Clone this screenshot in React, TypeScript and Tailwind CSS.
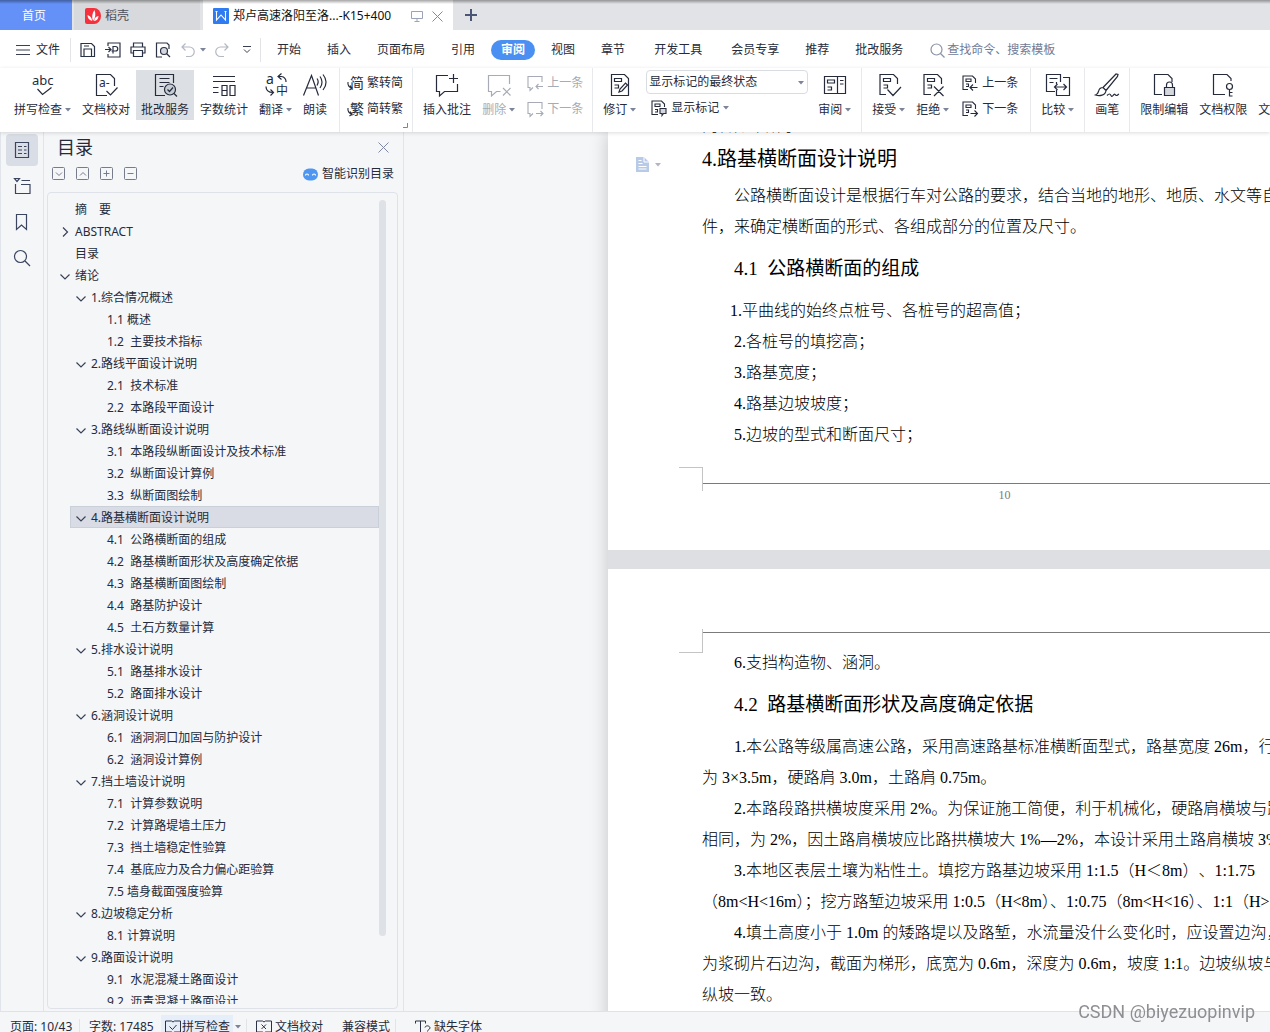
import { useState } from "react";
import type { ReactNode } from "react";
import clsx from "clsx";

type Entry = { level: 0 | 1 | 2; text: string; open?: boolean };

const OUTLINE: Entry[] = [
  { level: 0, text: "摘　要" },
  { level: 0, text: "ABSTRACT", open: false },
  { level: 0, text: "目录" },
  { level: 0, text: "绪论", open: true },
  { level: 1, text: "1.综合情况概述", open: true },
  { level: 2, text: "1.1 概述" },
  { level: 2, text: "1.2  主要技术指标" },
  { level: 1, text: "2.路线平面设计说明", open: true },
  { level: 2, text: "2.1  技术标准" },
  { level: 2, text: "2.2  本路段平面设计" },
  { level: 1, text: "3.路线纵断面设计说明", open: true },
  { level: 2, text: "3.1  本路段纵断面设计及技术标准" },
  { level: 2, text: "3.2  纵断面设计算例" },
  { level: 2, text: "3.3  纵断面图绘制" },
  { level: 1, text: "4.路基横断面设计说明", open: true },
  { level: 2, text: "4.1  公路横断面的组成" },
  { level: 2, text: "4.2  路基横断面形状及高度确定依据" },
  { level: 2, text: "4.3  路基横断面图绘制" },
  { level: 2, text: "4.4  路基防护设计" },
  { level: 2, text: "4.5  土石方数量计算" },
  { level: 1, text: "5.排水设计说明", open: true },
  { level: 2, text: "5.1  路基排水设计" },
  { level: 2, text: "5.2  路面排水设计" },
  { level: 1, text: "6.涵洞设计说明", open: true },
  { level: 2, text: "6.1  涵洞洞口加固与防护设计" },
  { level: 2, text: "6.2  涵洞设计算例" },
  { level: 1, text: "7.挡土墙设计说明", open: true },
  { level: 2, text: "7.1  计算参数说明" },
  { level: 2, text: "7.2  计算路堤墙土压力" },
  { level: 2, text: "7.3  挡土墙稳定性验算" },
  { level: 2, text: "7.4  基底应力及合力偏心距验算" },
  { level: 2, text: "7.5 墙身截面强度验算" },
  { level: 1, text: "8.边坡稳定分析", open: true },
  { level: 2, text: "8.1 计算说明" },
  { level: 1, text: "9.路面设计说明", open: true },
  { level: 2, text: "9.1  水泥混凝土路面设计" },
  { level: 2, text: "9.2  沥青混凝土路面设计" },
];

const INDENT = ["ml-[6px]", "ml-[22px]", "ml-[38px]"];

export default function App() {
  return (
    <div className="flex h-screen flex-col overflow-hidden bg-[#f5f6f8] text-xs text-[#262b3b] [font-family:'Noto_Sans','Noto_Sans_CJK_SC',sans-serif]">
      <TabBar />
      <MenuBar />
      <Ribbon />
      <div className="flex min-h-0 flex-1">
        <SideRail />
        <OutlinePanel />
        <DocumentView />
      </div>
      <StatusBar />
      <p className="fixed bottom-2 right-[15px] z-20 text-lg leading-6 text-[#8d8f93] [font-family:Roboto,sans-serif]">
        CSDN @biyezuopinvip
      </p>
    </div>
  );
}

/* ── Tab bar ── */
function TabBar() {
  return (
    <header className="relative flex h-[30px] shrink-0 bg-[#e2e3e6]">
      <button className="mr-0.5 w-[72px] bg-[#6391f8] pr-1 pt-0.5 text-white">首页</button>
      <button className="mr-[3px] flex w-[126px] items-center gap-1 bg-[#d7d9dc] pl-[11px] pt-0.5 text-[#4b5060]">
        <svg width="16" height="16" viewBox="0 0 16 16">
          <path d="M2 0h7a7 8 0 0 1 0 16H2a2 2 0 0 1-2-2V2a2 2 0 0 1 2-2z" fill="#f6303c" />
          <path d="M8 13C6.500 9 7 5 9.500 2c1.500 4 1 8-1.500 11zM7 13C4 12 2.500 10 2.500 7 5.500 8 7 10 7 13zM9 13c.5-3 2-4.500 4.500-5-.2 3-1.500 4.500-4.500 5z" fill="#fff" />
        </svg>
        稻壳
      </button>
      <div className="flex w-[250px] items-center bg-white pl-2.5 pt-0.5">
        <svg width="16" height="16" viewBox="0 0 16 16" className="mr-1 shrink-0">
          <rect width="16" height="16" rx="1" fill="#2f7bf0" />
          <path d="M3.500 3v9L8 7l4.500 5V3M2.500 3.500h2M11.500 3.500h2" fill="none" stroke="#fff" strokeWidth="1.1" />
        </svg>
        <span className="w-[174px] whitespace-nowrap text-[#111]">郑卢高速洛阳至洛...-K15+400</span>
        <svg width="12" height="12" viewBox="0 0 12 12" fill="none" stroke="#9aa3b8" className="ml-1">
          <path d="M.5 1.500h11v7H.5zM6 8.500v3M3.500 11.500h5" />
        </svg>
        <button aria-label="关闭" className="ml-[9px]">
          <svg width="11" height="11" viewBox="0 0 11 11" fill="none" stroke="#7f89a3">
            <path d="M.5.5l10 10M10.500.5l-10 10" />
          </svg>
        </button>
      </div>
      <button aria-label="新建" className="ml-3">
        <svg width="12" height="12" viewBox="0 0 12 12" stroke="#4b5675" strokeWidth="2">
          <path d="M6 0v12M0 6h12" />
        </svg>
      </button>
      <div className="absolute inset-x-0 top-0 h-1 bg-gradient-to-b from-black/35 to-transparent" />
    </header>
  );
}

/* ── Menu bar ── */
function MenuBar() {
  return (
    <nav className="flex h-[38px] shrink-0 items-center overflow-hidden whitespace-nowrap bg-white pt-0.5">
      <button className="ml-4 flex items-center gap-1.5">
        <svg width="14" height="10" viewBox="0 0 14 10" stroke="#3a4052">
          <path d="M0 .5h14M0 5h14M0 9.500h14" />
        </svg>
        文件
      </button>
      <Divider className="ml-2.5 h-6" />
      <div className="ml-[9px] flex items-center gap-[9px]">
        <QuickButton label="保存">
          <path d="M1 1.500h10.500l3 3v10H1zM4 14.500V7h7.500v7.500M4 4h5" />
        </QuickButton>
        <QuickButton label="输出为PDF">
          <path d="M3 4V1h12v14H3v-3M0 7.500h5.500M3.500 5l2.500 2.500L3.500 10M8 11.500V4.500h2.500a2 2 0 0 1 0 4.500H6.500" />
        </QuickButton>
        <QuickButton label="打印">
          <path d="M3.500 5V1h9v4M3.500 11H1V5h14v6h-2.500M3.500 8.500h9v6h-9z" />
        </QuickButton>
        <QuickButton label="打印预览">
          <path d="M7 15H1.500V1h10.500l2 2v4" />
          <circle cx="9" cy="9" r="3.500" fill="#d4d8de" />
          <path d="M11.500 11.500l3.500 3.500" />
        </QuickButton>
        <QuickButton label="撤销" muted>
          <path d="M5.500 1.500L2 5l3.500 3.500M2 5h7.500a4.500 4.500 0 0 1 0 9.500H6" />
        </QuickButton>
      </div>
      <Caret className="ml-1" />
      <div className="ml-2 flex items-center gap-3">
        <QuickButton label="恢复" muted>
          <path d="M10.500 1.500L14 5l-3.500 3.500M14 5H6.500a4.500 4.500 0 0 0 0 9.500H10" />
        </QuickButton>
        <button aria-label="自定义快速访问工具栏">
          <svg width="10" height="8" viewBox="0 0 10 8" fill="none" stroke="#3a4052">
            <path d="M1 .5h8M2 3.500l3 3 3-3" />
          </svg>
        </button>
      </div>
      <Divider className="ml-2 mr-[3px] h-6" />
      {["开始", "插入", "页面布局", "引用"].map((name) => (
        <button key={name} className="px-[13px]">
          {name}
        </button>
      ))}
      <button className="mx-[3px] h-5 rounded-full bg-[#4a90f2] px-2.5 font-bold text-white">审阅</button>
      {["视图", "章节"].map((name) => (
        <button key={name} className="px-[13px]">
          {name}
        </button>
      ))}
      <button className="px-4">开发工具</button>
      {["会员专享", "推荐", "批改服务"].map((name) => (
        <button key={name} className="px-[13px]">
          {name}
        </button>
      ))}
      <button className="ml-[14px] flex items-center gap-0.5 text-[#727b94]">
        <svg width="15" height="15" viewBox="0 0 15 15" fill="none" stroke="#8a93a8" strokeWidth="1.2">
          <circle cx="6.500" cy="6.500" r="5.500" />
          <path d="M10.500 10.500l4 4" />
        </svg>
        查找命令、搜索模板
      </button>
    </nav>
  );
}

function QuickButton({ label, muted, children }: { label: string; muted?: boolean; children: ReactNode }) {
  return (
    <button aria-label={label} className={muted ? "text-[#b3b8c2]" : "text-[#2b3245]"}>
      <svg width="16" height="16" viewBox="0 0 16 16" fill="none" stroke="currentColor" strokeWidth="1.2">
        {children}
      </svg>
    </button>
  );
}

function Caret({ className }: { className?: string }) {
  return (
    <svg width="6" height="4" viewBox="0 0 6 4" className={clsx("shrink-0", className)}>
      <path d="M0 0h6L3 3.500z" fill="#7b8499" />
    </svg>
  );
}

function Divider({ className }: { className?: string }) {
  return <span className={clsx("w-px shrink-0 bg-[#e2e4e8]", className)} />;
}

/* ── Ribbon ── */
type ButtonProps = {
  label: string;
  caret?: boolean;
  active?: boolean;
  muted?: boolean;
  children: ReactNode;
};

function BigButton({ label, caret, active, muted, children }: ButtonProps) {
  return (
    <button
      className={clsx(
        "flex h-[50px] shrink-0 flex-col items-center px-[5px] pt-[3px]",
        active && "bg-[#dce0e5]",
        muted && "text-[#a6abb5]",
      )}
    >
      <svg width="24" height="24" viewBox="0 0 24 24" fill="none" stroke="currentColor" strokeWidth="1.2" className="overflow-visible">
        {children}
      </svg>
      <span className="mt-[3px] flex items-center gap-[3px] whitespace-nowrap leading-5">
        {label}
        {caret && <Caret />}
      </span>
    </button>
  );
}

function SmallButton({ label, caret, muted, children }: ButtonProps) {
  return (
    <button className={clsx("flex h-[26px] items-center gap-1 whitespace-nowrap", muted && "text-[#a6abb5]")}>
      <svg width="16" height="16" viewBox="0 0 16 16" fill="none" stroke="currentColor" strokeWidth="1.1" className="overflow-visible">
        {children}
      </svg>
      {label}
      {caret && <Caret />}
    </button>
  );
}

function Group({ className, children }: { className?: string; children: ReactNode }) {
  return (
    <div className={clsx("relative flex shrink-0 gap-px border-r border-[#e8e9ec] pt-0.5", className)}>
      {children}
    </div>
  );
}

function IconText({ x, y, size, children }: { x: number; y: number; size: number; children: string }) {
  return (
    <text x={x} y={y} fontSize={size} fill="currentColor" stroke="none">
      {children}
    </text>
  );
}

function Ribbon() {
  const [view, setView] = useState("显示标记的最终状态");

  return (
    <div className="relative z-10 flex h-16 shrink-0 overflow-hidden bg-white shadow-[0_1px_4px_rgba(0,0,0,0.14)]">
      <Group className="pl-[9px] pr-[7px]">
        <BigButton label="拼写检查" caret>
          <IconText x={1} y={12} size={13}>abc</IconText>
          <path d="M6.500 16l5 5.500 9-7" />
        </BigButton>
        <BigButton label="文档校对">
          <path d="M13 22.500H2.500v-21h14l4 4V13M12.500 18l4 4 7-7.500" />
          <IconText x={5} y={14} size={12}>a-</IconText>
        </BigButton>
        <BigButton label="批改服务" active>
          <path d="M12 22.500H2.500v-21h18V10M6.500 5.500h10M6.500 9.500h10M6.500 13.500h4" />
          <circle cx="17" cy="16.500" r="5.500" fill="#c6ccd4" />
          <path d="M14.500 16.500l2 2 3.500-4M21 20.500l3 3" />
        </BigButton>
        <BigButton label="字数统计">
          <path d="M1 3.500h22M1 8.500h22M1 14.500h5.500M1 19.500h5.500M10 12.500h5v10h-5zM10 17.500h5M18 12.500h5v10h-5z" />
        </BigButton>
        <BigButton label="翻译" caret>
          <IconText x={2} y={11} size={14}>a</IconText>
          <IconText x={12} y={22} size={12}>中</IconText>
          <path d="M17.500.5l-3.500 3 3.500 3M14 3.500h3.500a5 5 0 0 1 4.500 5.500M2 13.500c0 4 2 6 7 6M6.500 16.500l3 3-3 3" />
        </BigButton>
        <BigButton label="朗读">
          <path d="M.5 22.500L8.500 2.500l7 20M3.500 15h9.500M14 5.500c1.500 2 1.500 4.500 0 7M17 3.500c2.500 3.500 2.500 8 0 11.500M20 1.500c4 5 4 10.500 0 15.500" />
        </BigButton>
      </Group>

      <Group className="pl-[7px] pr-[9px]">
        <div>
          <SmallButton label="繁转简">
            <IconText x={3} y={13} size={14}>简</IconText>
            <path d="M1 7c-.5 3 0 5 4 6M3 10.500l2 2.500-2.500 2" />
          </SmallButton>
          <SmallButton label="简转繁">
            <IconText x={3} y={13} size={14}>繁</IconText>
            <path d="M1 7c-.5 3 0 5 4 6M3 10.500l2 2.500-2.500 2" />
          </SmallButton>
        </div>
        <svg width="5" height="5" viewBox="0 0 5 5" className="absolute bottom-1 right-1" fill="none" stroke="#7b8499">
          <path d="M4.500 0v4.500H0" />
        </svg>
      </Group>

      <Group className="pl-[5px] pr-[9px]">
        <BigButton label="插入批注">
          <path d="M13 2.500H1.500v16h3v4.500l5-4.500h13V11M18.500 1v9M14 5.500h9" />
        </BigButton>
        <BigButton label="删除" caret muted>
          <path d="M22.500 11V2.500h-21v16h3v4.500l5-4.500h4M16 15l7.500 7.500M23.500 15L16 22.500" />
        </BigButton>
        <div className="pl-1.5">
          <SmallButton label="上一条" muted>
            <path d="M15 7V1.500H1v11h2v3l3-3M16 11.500H9M11.500 9L9 11.500l2.500 2.500" />
          </SmallButton>
          <SmallButton label="下一条" muted>
            <path d="M15 8V1.500H1v11h2v3l3-3M9 12.500h7M13.500 10l2.500 2.500-2.500 2.500" />
          </SmallButton>
        </div>
      </Group>

      <Group className="pl-[5px] pr-[5px]">
        <BigButton label="修订" caret>
          <path d="M3.500 1.500h13l4 4v17h-17zM6.500 5.500h7v3h-7zM6.500 12h4v3h-4M11 19l1-3 5.500-6 2 2-5.500 6z" />
        </BigButton>
        <div className="mx-1">
          <div className="relative w-[162px]">
            <select
              aria-label="标记显示状态"
              value={view}
              onChange={(e) => setView(e.target.value)}
              className="block h-6 w-full appearance-none rounded-sm border border-[#d9dce1] bg-white pl-0.5 text-xs"
            >
              <option>显示标记的最终状态</option>
            </select>
            <Caret className="pointer-events-none absolute right-1 top-[11px]" />
          </div>
          <div className="pl-[5px] pt-px">
            <SmallButton label="显示标记" caret>
              <path d="M7 14.500H1V1h9.500l3 3v3M4 4h5v2.500H4zM4 9.500h2.500v2.500H4" />
              <path d="M9 8.500h6v5h-2.500l-1.500 2v-2H9z" fill="#d4d8de" />
            </SmallButton>
          </div>
        </div>
        <BigButton label="审阅" caret>
          <path d="M1.500 3.500h21v17h-21zM14.500 3.500v17M4.500 7h7v3h-7zM4.500 14h4v3h-4M17 7.500h3.500M17 11h3.500" />
        </BigButton>
      </Group>

      <Group className="pl-[5px] pr-3">
        <BigButton label="接受" caret>
          <path d="M9 21.500H3v-20h13.500l4 4V11M6.500 5.500h7v3h-7zM6.500 12h4v3h-4M10.500 16.500l5.500 6 8-8.500" />
        </BigButton>
        <BigButton label="拒绝" caret>
          <path d="M10 21.500H3v-20h13.500l4 4V11M6.500 5.500h7v3h-7zM6.500 12h4v3h-4M13 13.500l9.500 9.500M22.500 13.500L13 23" />
        </BigButton>
        <div className="pl-[7px]">
          <SmallButton label="上一条">
            <path d="M6 14.500H1V1h9.500l3 3v4M4 4h5v2.500H4zM4 9h2.500v2.500H4M15.500 12.500H8.500M11 9.500l-3 3 3 3" />
          </SmallButton>
          <SmallButton label="下一条">
            <path d="M6 14.500H1V1h9.500l3 3v4M4 4h5v2.500H4zM4 9h2.500v2.500H4M8.500 12.500h7M12.500 9.500l3 3-3 3" />
          </SmallButton>
        </div>
      </Group>

      <Group className="pl-[5px] pr-[5px]">
        <BigButton label="比较" caret>
          <path d="M14.500 9V1.500h-14v17H9M3.500 5.500h8M3.500 9.500h4M17 4.500h6.500v18h-13V17M10.500 11V9M8.500 14h12M11.500 11l-3 3 3 3M17.500 11l3 3-3 3" />
        </BigButton>
      </Group>
      <Group className="pl-[5px] pr-[5px]">
        <BigButton label="画笔">
          <path d="M8 14.500L21 1l2 .5-.5 2L11 17.500M8 14.500l3 3M8 14.500c-3 0-4 1.500-4.500 4-.5 2-1.500 3-3 3.500 4 1.500 10 .5 10.500-4.500M12 22.500c2-2 3-2 4 0s2 0 3-1 1.500 1 2.500 1 1.500-1 2.500-1.500" />
        </BigButton>
      </Group>
      <div className="flex shrink-0 gap-px pl-[5px] pt-0.5">
        <BigButton label="限制编辑">
          <path d="M10 21.500H2.500v-20H16l4 4V9" />
          <path d="M12.500 14.500h10v8h-10z" fill="#d4d8de" />
          <path d="M14.500 14.500V12a3 3 0 0 1 6 0v2.500" />
        </BigButton>
        <BigButton label="文档权限">
          <path d="M14 21.500H2.500v-20H16l4 4V8M18.500 16.500v7M18.500 19.500h3M18.500 23h3" />
          <circle cx="18.500" cy="13.500" r="3" />
        </BigButton>
        <span className="pl-[5px] pt-[30px] leading-5">文</span>
      </div>
    </div>
  );
}

/* ── Left rail ── */
function RailButton({ label, active, children }: { label: string; active?: boolean; children: ReactNode }) {
  return (
    <button
      aria-label={label}
      className={clsx("flex size-8 items-center justify-center rounded-sm", active && "bg-[#d9dde5]")}
    >
      <svg width="18" height="18" viewBox="0 0 18 18" fill="none" stroke="#3b4560" strokeWidth="1.2">
        {children}
      </svg>
    </button>
  );
}

function SideRail() {
  return (
    <aside className="flex w-11 shrink-0 flex-col gap-1 border-x border-[#e1e4ea] pl-[5px] pt-0.5">
      <RailButton label="目录" active>
        <path d="M2.500 1.500h13v15h-13zM5 5.500h4M5 9h4M5 12.500h4M11 5.500h2.500M11 9h2.500M11 12.500h2.500" />
      </RailButton>
      <RailButton label="章节">
        <path d="M1.500 1.500h5l-2.500 3zM8.500 3.500h8.500M2.500 7v9.500h14.500v-9H8" />
      </RailButton>
      <RailButton label="书签">
        <path d="M3.500 1.500h10v15l-5-4.500-5 4.500z" />
      </RailButton>
      <RailButton label="查找">
        <circle cx="7.500" cy="7.500" r="6" />
        <path d="M12 12l5 5" />
      </RailButton>
    </aside>
  );
}

/* ── Outline panel ── */
function OutlinePanel() {
  const [selected, setSelected] = useState(14);
  const tools = [
    { label: "展开", d: "M4 5.500l3 3 3-3" },
    { label: "收起", d: "M4 8.500l3-3 3 3" },
    { label: "添加", d: "M3.500 6.500h6M6.500 3.500v6" },
    { label: "删除", d: "M3.500 6.500h6" },
  ];

  return (
    <section className="flex w-[360px] shrink-0 flex-col border-r border-[#e1e4ea]">
      <div className="flex h-[30px] items-center justify-between pl-[13px] pr-[14px]">
        <h2 className="text-lg leading-[30px]">目录</h2>
        <button aria-label="关闭目录">
          <svg width="11" height="11" viewBox="0 0 11 11" stroke="#7f89a3">
            <path d="M.5.5l10 10M10.500.5l-10 10" />
          </svg>
        </button>
      </div>
      <div className="flex h-[30px] items-center justify-between pb-1.5 pl-2 pr-[9px]">
        <div className="flex gap-2.5">
          {tools.map((tool) => (
            <button key={tool.label} aria-label={tool.label}>
              <svg width="14" height="14" viewBox="0 0 14 14" fill="none" stroke="#767c8b" className="block">
                <rect x=".5" y=".5" width="12" height="12" rx="1" />
                <path d={tool.d} />
              </svg>
            </button>
          ))}
        </div>
        <button className="flex items-center gap-1">
          <svg width="15" height="13" viewBox="0 0 15 13">
            <rect y="0.500" width="15" height="12" rx="6" fill="#4d97f3" />
            <path d="M2.500 7.500a1.500 1.500 0 0 1 3 0M9.500 7.500a1.500 1.500 0 0 1 3 0" fill="none" stroke="#fff" strokeWidth="1.200" />
          </svg>
          智能识别目录
        </button>
      </div>
      <div className="mb-0.5 ml-[3px] mr-[5px] flex min-h-0 flex-1 rounded-sm border border-[#dfe2e9] pb-1 pt-[5px]">
        <ul className="flex-1 overflow-hidden">
          {OUTLINE.map((entry, i) => (
            <li key={entry.text} className={INDENT[entry.level]}>
              <button
                onClick={() => setSelected(i)}
                className={clsx(
                  "flex h-[22px] w-full items-center gap-1 whitespace-pre border pl-1 pt-0.5",
                  i === selected ? "border-[#c9d0da] bg-[#d9dce5]" : "border-transparent",
                )}
              >
                <Chevron open={entry.open} />
                {entry.text}
              </button>
            </li>
          ))}
        </ul>
        <div className="mr-[11px] mt-0.5 h-[736px] w-[7px] rounded-full bg-[#dee1e5]" />
      </div>
    </section>
  );
}

function Chevron({ open }: { open?: boolean }) {
  return (
    <svg width="12" height="12" viewBox="0 0 12 12" fill="none" stroke="#3a4258" strokeWidth="1.200">
      {open === true && <path d="M1.500 4.500L6 9l4.500-4.500" />}
      {open === false && <path d="M4 1.500L8.500 6 4 10.500" />}
    </svg>
  );
}

/* ── Document ── */
function Line({ indent, className, children }: { indent?: boolean; className?: string; children: ReactNode }) {
  return <span className={clsx("block", indent && "pl-8", className)}>{children}</span>;
}

function DocumentView() {
  return (
    <main className="min-w-0 flex-1 overflow-hidden pl-[204px]">
      <div className="flex w-[794px] flex-col gap-[19px] whitespace-nowrap bg-[#dedfe2] text-base font-light leading-[31px] text-black shadow-[0_0_18px_rgba(0,0,0,0.2)] [font-family:'Liberation_Serif','Noto_Sans_CJK_SC',serif]">
        <article className="bg-white pb-11">
          <div className="flex">
            <div className="flex w-[94px] gap-[6px] pl-7 pt-[25px]">
              <svg width="13" height="15" viewBox="0 0 13 15">
                <path d="M0 0h8l5 5v10H0z" fill="#b7cbe9" />
                <path d="M8 0v5h5M2.500 3.500h3M2.500 6.500h4M2.500 9.500h8M2.500 12h8" fill="none" stroke="#fff" />
              </svg>
              <Caret className="mt-1.5 opacity-60" />
            </div>
            <div>
              <div className="flex h-0.5 items-end overflow-hidden leading-4">
                <p>内容如下所示：</p>
              </div>
              <h1 className="mt-1 text-xl font-normal leading-[42px]">4.路基横断面设计说明</h1>
              <p>
                <Line indent>公路横断面设计是根据行车对公路的要求，结合当地的地形、地质、水文等自</Line>
                <Line>件，来确定横断面的形式、各组成部分的位置及尺寸。</Line>
              </p>
              <h2 className="whitespace-pre pl-8 text-[19px] font-normal leading-[53px]">4.1  公路横断面的组成</h2>
              <p className="pl-7">1.平曲线的始终点桩号、各桩号的超高值；</p>
              <p className="pl-8">2.各桩号的填挖高；</p>
              <p className="pl-8">3.路基宽度；</p>
              <p className="pl-8">4.路基边坡坡度；</p>
              <p className="pl-8">5.边坡的型式和断面尺寸；</p>
            </div>
          </div>
          <footer className="mt-[17px] flex pl-[71px] pr-24">
            <span className="size-6 border-r border-t border-[#c4c4c4]" />
            <div className="mt-4 flex-1 border-t border-[#7b7b7b] text-center text-xs leading-[22px] text-[#7b7b7b]">
              10
            </div>
          </footer>
        </article>

        <article className="bg-white pb-24 pt-[60px]">
          <div className="flex h-[18px] items-start pl-[71px] pr-24">
            <span className="size-6 border-b border-r border-[#c4c4c4]" />
            <span className="mt-[3px] flex-1 border-t border-[#7b7b7b]" />
          </div>
          <div className="pl-[94px]">
            <p className="pl-8">6.支挡构造物、涵洞。</p>
            <h2 className="whitespace-pre pl-8 text-[19px] font-normal leading-[53px]">4.2  路基横断面形状及高度确定依据</h2>
            <p>
              <Line indent>1.本公路等级属高速公路，采用高速路基标准横断面型式，路基宽度 26m，行</Line>
              <Line>为 3×3.5m，硬路肩 3.0m，土路肩 0.75m。</Line>
            </p>
            <p>
              <Line indent>2.本路段路拱横坡度采用 2%。为保证施工简便，利于机械化，硬路肩横坡与路</Line>
              <Line>相同，为 2%，因土路肩横坡应比路拱横坡大 1%—2%，本设计采用土路肩横坡 3%</Line>
            </p>
            <p>
              <Line indent className="[text-spacing-trim:space-all]">
                3.本地区表层土壤为粘性土。填挖方路基边坡采用 1:1.5（H＜8m）、1:1.75
              </Line>
              <Line>（8m&lt;H&lt;16m）；挖方路堑边坡采用 1:0.5（H&lt;8m）、1:0.75（8m&lt;H&lt;16）、1:1（H&gt;</Line>
            </p>
            <p>
              <Line indent>4.填土高度小于 1.0m 的矮路堤以及路堑，水流量没什么变化时，应设置边沟，</Line>
              <Line>为浆砌片石边沟，截面为梯形，底宽为 0.6m，深度为 0.6m，坡度 1:1。边坡纵坡与</Line>
              <Line>纵坡一致。</Line>
            </p>
          </div>
        </article>
      </div>
    </main>
  );
}

/* ── Status bar ── */
function StatusBar() {
  return (
    <footer className="z-10 h-[21px] shrink-0 overflow-hidden border-t border-[#dfe2e8] bg-[#f5f6f8]">
      <div className="flex h-[30px] items-center whitespace-nowrap pl-2.5">
        <span className="w-[69px]">页面: 10/43</span>
        <Divider className="h-4" />
        <span className="ml-[9px] w-[72px]">字数: 17485</span>
        <button className="flex h-6 items-center bg-[#e6eefa] pl-1 pr-[3px]">
          <svg width="16" height="14" viewBox="0 0 16 14" fill="none" stroke="#2b3245" className="mr-px">
            <path d="M.5 1h6l1.500 1L9.500 1h6v11h-6L8 13l-1.500-1h-6zM4.500 6.500l3 3 4-4.500" />
          </svg>
          拼写检查
        </button>
        <Caret className="ml-0.5" />
        <Divider className="ml-[5px] h-4" />
        <button className="ml-[9px] flex items-center gap-[3px]">
          <svg width="16" height="14" viewBox="0 0 16 14" fill="none" stroke="#2b3245">
            <path d="M.5 1h6l1.500 1L9.500 1h6v11h-6L8 13l-1.500-1h-6zM5.500 4.500l4.500 4.500M10 4.500L5.500 9" />
          </svg>
          文档校对
        </button>
        <button className="ml-[19px] mr-[5px]">兼容模式</button>
        <Divider className="h-4" />
        <button className="ml-[19px] flex items-center gap-[3px]">
          <svg width="16" height="14" viewBox="0 0 16 14" fill="none" stroke="#2b3245">
            <path d="M.5 3.500V1h10v2.500M5.500 1v12M3.500 13h4M10 7.500c.5-2.500 5-2 5 .5 0 1.500-2.500 1.500-2.500 3.500M12.500 12.500v1.500" />
          </svg>
          缺失字体
        </button>
      </div>
    </footer>
  );
}
